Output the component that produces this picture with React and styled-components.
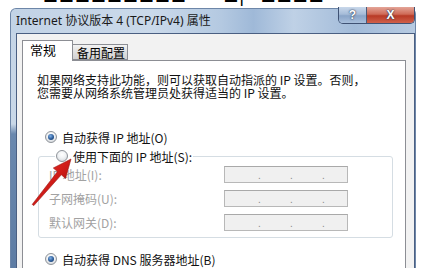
import styled, { createGlobalStyle } from "styled-components";

const Global = createGlobalStyle`
  html, body {
    margin: 0;
    background: #fff;
    overflow: hidden;
  }
  body {
    font-family: "Noto Sans CJK SC", sans-serif;
  }
`;

const Page = styled.div`
  position: relative;
  width: 431px;
  height: 268px;
  overflow: hidden;
`;

const TopStrip = styled.div`
  height: 8px;
  overflow: hidden;
  padding-left: 43px;
  font-size: 15px;
  font-weight: bold;
  color: #000;
  line-height: 15px;
  span {
    display: block;
    margin-top: -12px;
    letter-spacing: 1px;
  }
`;

const Window = styled.div`
  margin-left: 10px;
  width: 404px;
  height: 280px;
  border: 1px solid #6d86a8;
  border-bottom: none;
  border-radius: 6px 6px 0 0;
  background: linear-gradient(
    to bottom,
    #c4d4e6 0,
    #c9d8e8 115px,
    #6a88ae 125px,
    #5b7aa2 100%
  );
`;

const TitleBar = styled.div`
  height: 24px;
  display: flex;
  align-items: flex-start;
  justify-content: space-between;
  border-radius: 6px 6px 0 0;
  background: linear-gradient(
    90deg,
    #c2d3e6 0%,
    #cad9ea 35%,
    #b4c9e1 52%,
    #9fb9d8 60%,
    #bfd1e6 70%,
    #a2bbd9 85%,
    #b7cbe2 100%
  );
`;

const Title = styled.div`
  padding-left: 5px;
  line-height: 24px;
  font-size: 12px;
  color: #1a1a1a;
  font-family: "Noto Sans", "Noto Sans CJK SC", sans-serif;
`;

const Buttons = styled.div`
  display: flex;
  margin-top: -2px;
  border: 1px solid #3f5274;
  border-top: none;
  border-radius: 0 0 5px 5px;
  overflow: hidden;
`;

const CapButton = styled.div`
  width: ${(p) => p.$w}px;
  height: 16px;
  display: flex;
  align-items: center;
  justify-content: center;
  font-family: "Liberation Sans", sans-serif;
  font-weight: bold;
  font-size: 12px;
  color: #fff;
  text-shadow: 0 0 2px #2b3a55, 0 0 1px #2b3a55;
  background: ${(p) =>
    p.$close
      ? "linear-gradient(to bottom, #e4a598 0%, #cf6a57 45%, #b83a26 55%, #d0604a 100%)"
      : "linear-gradient(to bottom, #c9d8ea 0%, #a6bcd8 45%, #8aa5c8 55%, #a8bfdc 100%)"};
  border-left: ${(p) => (p.$close ? "1px solid #4a5a78" : "none")};
`;

const Body = styled.div`
  margin: 0 0 0 5px;
  height: 240px;
  border: 1px solid #4a5f82;
  border-bottom: none;
  background: #f2f2f2;
  padding: 6px 8px 0 5px;
`;

const TabRow = styled.div`
  display: flex;
  align-items: flex-end;
  height: 20px;
`;

const Tab = styled.div`
  position: relative;
  z-index: ${(p) => (p.$active ? 2 : 1)};
  width: ${(p) => p.$w}px;
  height: ${(p) => (p.$active ? 21 : 16)}px;
  margin-bottom: ${(p) => (p.$active ? -1 : 0)}px;
  box-sizing: border-box;
  border: 1px solid #8c8e94;
  border-bottom: ${(p) => (p.$active ? "none" : "1px solid #8c8e94")};
  border-left: ${(p) => (p.$first ? "1px solid #8c8e94" : "none")};
  background: ${(p) =>
    p.$active ? "#fff" : "linear-gradient(to bottom, #f3f3f3, #e0e0e0 50%, #d2d2d2)"};
  font-size: ${(p) => (p.$active ? 13 : 12)}px;
  line-height: ${(p) => (p.$active ? 18 : 15)}px;
  padding-left: ${(p) => (p.$active ? 7 : 4)}px;
  color: #000;
`;

const Panel = styled.div`
  height: 220px;
  box-sizing: border-box;
  border: 1px solid #8c8e94;
  background: #fff;
  padding: 12px 0 0 14px;
  font-size: 12px;
  color: #111;
`;

const Para = styled.p`
  margin: 0;
  line-height: 13px;
  white-space: nowrap;
`;

const RadioRow = styled.div`
  display: flex;
  align-items: center;
  height: 16px;
  margin-top: ${(p) => p.$mt || 0}px;
  padding-left: ${(p) => (p.$legend ? 0 : 8)}px;
  gap: 5px;
  white-space: nowrap;
`;

const Radio = styled.span`
  width: 12px;
  height: 12px;
  box-sizing: border-box;
  border-radius: 50%;
  border: 1px solid #8e9399;
  background: radial-gradient(circle at 50% 35%, #ffffff 0, #f0f2f4 45%, #c9cdd2 100%);
  display: flex;
  align-items: center;
  justify-content: center;
  &::after {
    content: "";
    display: ${(p) => (p.$checked ? "block" : "none")};
    width: 6px;
    height: 6px;
    border-radius: 50%;
    background: radial-gradient(circle at 40% 35%, #7fb0e6 0, #2a5a97 55%, #13345f 100%);
  }
`;

const Group = styled.fieldset`
  margin: 3px 0 0 1px;
  width: 355px;
  box-sizing: border-box;
  border: 1px solid #d5dde3;
  border-radius: 3px;
  padding: 2px 0 6px 10px;
  legend {
    padding: 0 1px;
    margin-left: 6px;
  }
`;

const FieldGrid = styled.div`
  display: grid;
  grid-template-columns: 175px 124px;
  row-gap: 7px;
  align-items: center;
`;

const FieldLabel = styled.span`
  color: #a2a2a2;
  white-space: nowrap;
`;

const IpBox = styled.div`
  height: 17px;
  box-sizing: border-box;
  border: 1px solid #b8b8b8;
  border-top-color: #a9a9a9;
  background: #f0f0f0;
  display: flex;
  padding-left: 33px;
  gap: 29px;
  align-items: center;
  color: #8a8a8a;
  font-family: "Liberation Sans", sans-serif;
  font-size: 10px;
  line-height: 10px;
  span {
    display: block;
    width: 3px;
    padding-top: 2px;
  }
`;

const Overlay = styled.svg`
  position: absolute;
  left: 0;
  top: 0;
  pointer-events: none;
`;

const IpField = () => (
  <IpBox>
    <span>.</span>
    <span>.</span>
    <span>.</span>
  </IpBox>
);

export default function App() {
  return (
    <Page>
      <Global />
      <TopStrip>
        <span>■■■■■■■■■　　 ■|　■■■■</span>
      </TopStrip>
      <Window>
        <TitleBar>
          <Title>Internet 协议版本 4 (TCP/IPv4) 属性</Title>
          <Buttons>
            <CapButton $w={27}>?</CapButton>
            <CapButton $w={47} $close>
              X
            </CapButton>
          </Buttons>
        </TitleBar>
        <Body>
          <TabRow>
            <Tab $active $first $w={51}>
              常规
            </Tab>
            <Tab $w={55}>备用配置</Tab>
          </TabRow>
          <Panel>
            <Para>如果网络支持此功能，则可以获取自动指派的 IP 设置。否则，</Para>
            <Para>您需要从网络系统管理员处获得适当的 IP 设置。</Para>
            <RadioRow $mt={30}>
              <Radio $checked />
              自动获得 IP 地址(O)
            </RadioRow>
            <Group>
              <legend>
                <RadioRow $legend>
                  <Radio />
                  使用下面的 IP 地址(S):
                </RadioRow>
              </legend>
              <FieldGrid>
                <FieldLabel>IP 地址(I):</FieldLabel>
                <IpField />
                <FieldLabel>子网掩码(U):</FieldLabel>
                <IpField />
                <FieldLabel>默认网关(D):</FieldLabel>
                <IpField />
              </FieldGrid>
            </Group>
            <RadioRow $mt={13}>
              <Radio $checked />
              自动获得 DNS 服务器地址(B)
            </RadioRow>
          </Panel>
        </Body>
      </Window>
      <Overlay width="431" height="268" viewBox="0 0 431 268">
        <defs>
          <linearGradient id="arrowRed" x1="0" y1="0" x2="1" y2="1">
            <stop offset="0" stopColor="#f03a30" />
            <stop offset="0.5" stopColor="#d01c18" />
            <stop offset="1" stopColor="#8e0e0c" />
          </linearGradient>
        </defs>
        <polygon
          points="33.8,205.6 61.3,174.8 65.5,178.4 71,159 53.3,168 57.5,171.6 32.2,204.4"
          fill="url(#arrowRed)"
          stroke="#9a1410"
          strokeWidth="0.6"
          strokeLinejoin="round"
        />
      </Overlay>
    </Page>
  );
}
